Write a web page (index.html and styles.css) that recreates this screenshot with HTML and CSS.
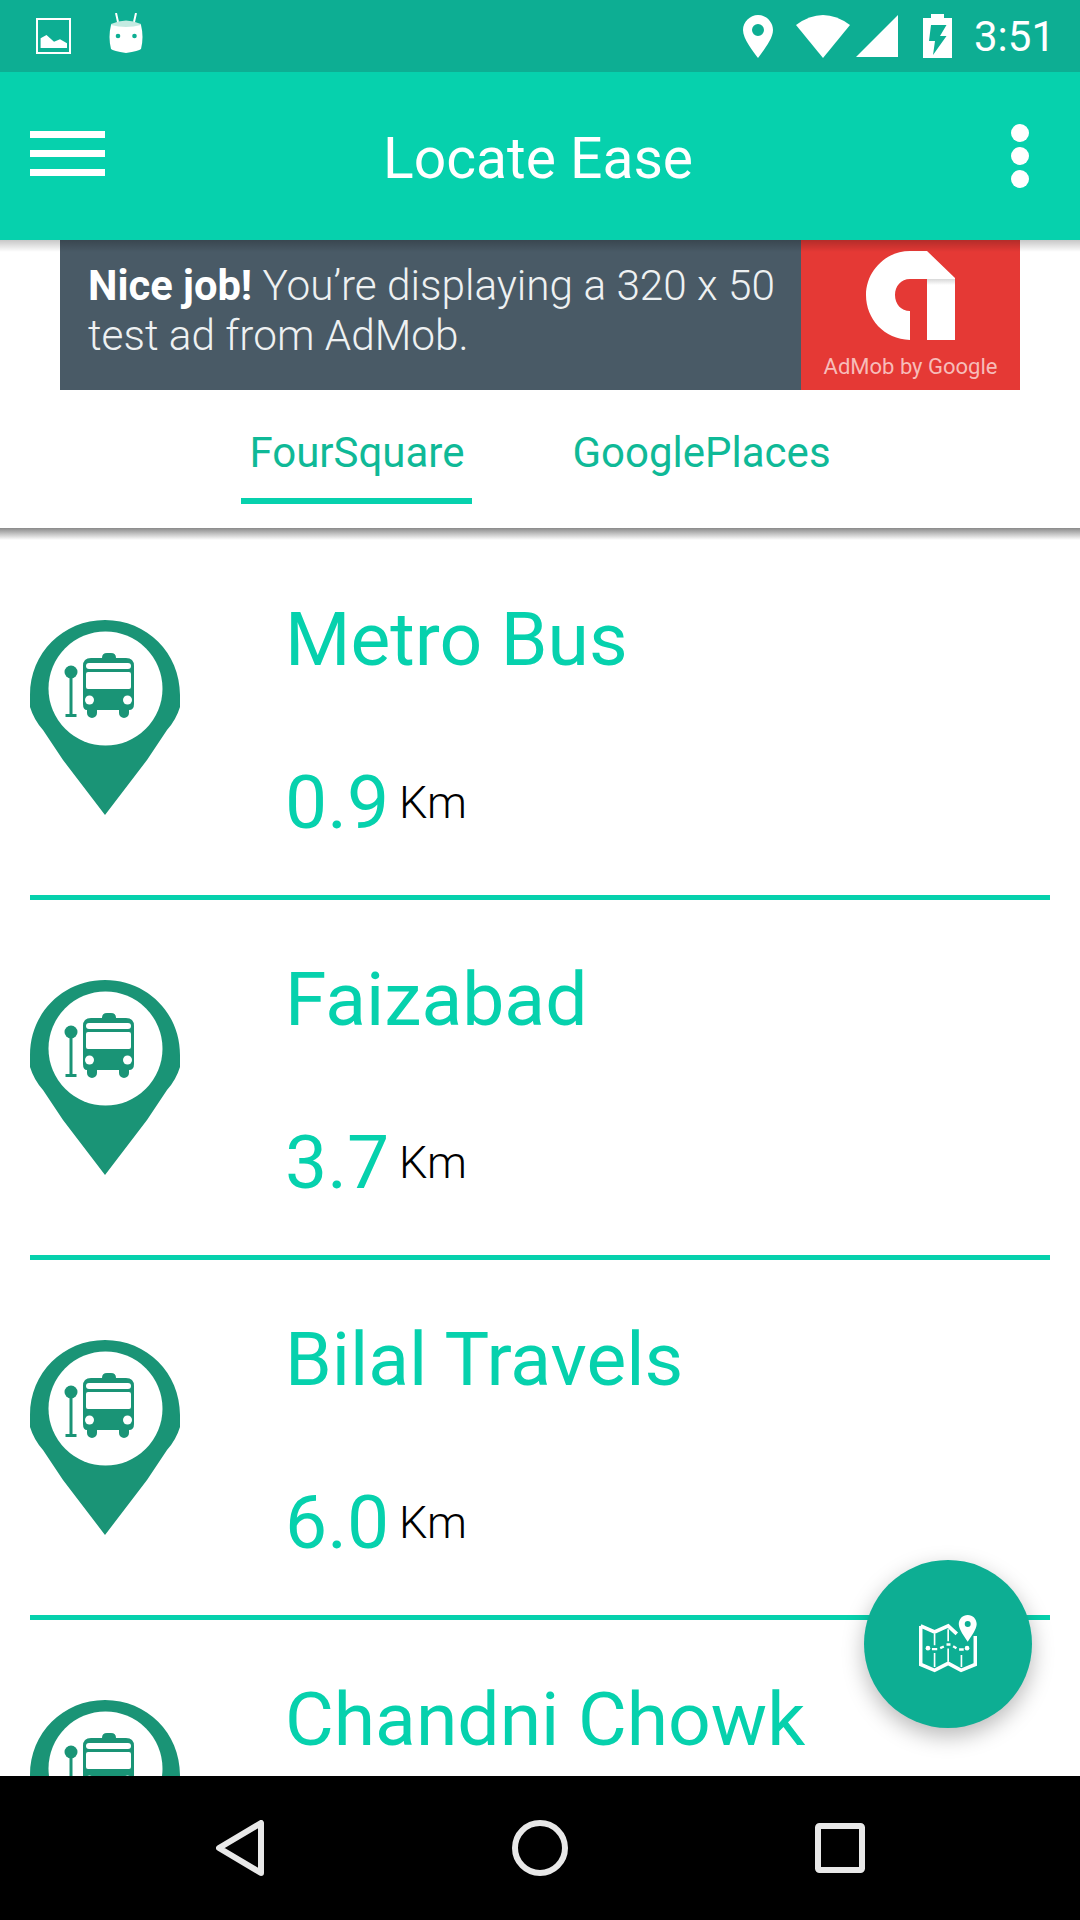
FILE: index.html
```html
<!DOCTYPE html>
<html lang="en">
<head>
<meta charset="utf-8">
<title>Locate Ease</title>
<link rel="stylesheet" href="styles.css">
</head>
<body>
<svg class="defs" width="0" height="0" aria-hidden="true">
  <defs>
    <linearGradient id="fold" x1="0" y1="0" x2="0" y2="1">
      <stop offset="0" stop-color="#d8d8d8"/>
      <stop offset="1" stop-color="#ffffff"/>
    </linearGradient>
  </defs>
  <symbol id="pin" viewBox="0 0 150 195">
    <path fill="#1a9476" d="M75 0C117 0 150 33 150 75V87Q146 100 137 110L117 140L75 195L33 140L13 110Q4 100 0 87V75C0 33 33 0 75 0Z"/>
    <circle cx="75.500" cy="68.500" r="57" fill="#fff"/>
    <path fill="#1a9476" d="M72 38Q72 33 77 33H81Q86 33 86 38H96Q104 38 104 46V84Q104 90 99 90V93A5 5 0 0 1 89 93V90H67V93A5 5 0 0 1 57 93V90Q53 90 53 84V46Q53 38 61 38Z"/>
    <rect x="56" y="43" width="45" height="6" rx="3" fill="#fff"/>
    <rect x="56" y="52" width="45" height="17" rx="2" fill="#fff"/>
    <circle cx="59.500" cy="80" r="4.500" fill="#fff"/>
    <circle cx="97.500" cy="80" r="4.500" fill="#fff"/>
    <circle cx="41" cy="52" r="6.500" fill="#1a9476"/>
    <rect x="39.500" y="55" width="3" height="40" fill="#1a9476"/>
    <rect x="35.500" y="94" width="11" height="3" fill="#1a9476"/>
  </symbol>
</svg>
<div class="phone">
  <header class="status">
    <div class="status-left">
      <svg class="ic-image" viewBox="0 0 35 36"><path fill="#fff" d="M0 0H35V36H0ZM2 2V34H33V2Z" fill-rule="evenodd"/><path fill="#fff" d="M4.600 20.300L10.500 17L18 23.700L24 21.300L31 25.300V30H4.600Z"/></svg>
      <svg class="ic-android" viewBox="0 0 34 40"><path stroke="#fff" stroke-width="2" d="M7 0L9 9M27 0L25 9"/><path fill="#c4ebe2" d="M2 11Q17 4 32 11V14H2Z"/><path fill="#fff" d="M2 12Q17 16 32 12Q35 24 32 36Q30 38 17 40Q4 38 2 36Q-1 24 2 12Z"/><circle cx="9" cy="23" r="2.300" fill="#0dae93"/><circle cx="25.500" cy="23" r="2.300" fill="#0dae93"/></svg>
    </div>
    <div class="status-right">
      <svg class="ic-loc" viewBox="0 0 30 43"><path fill="#fff" fill-rule="evenodd" d="M15 0C23 0 30 7 30 15C30 24 20 36 15 43C10 36 0 24 0 15C0 7 7 0 15 0ZM15 9A6 6 0 1 0 15 21A6 6 0 1 0 15 9Z"/></svg>
      <svg class="ic-wifi" viewBox="0 0 54 43"><path fill="#fff" d="M0 10Q27 -10 54 10L27 43Z"/></svg>
      <svg class="ic-signal" viewBox="0 0 42 42"><path fill="#fff" d="M42 0V42H0Z"/></svg>
      <svg class="ic-batt" viewBox="0 0 29 44"><path fill="#fff" fill-rule="evenodd" d="M8 0H21V4H29V44H0V4H8ZM8 11L6 27H12L10 41L23.500 22H17L23.500 11Z"/></svg>
      <span class="clock">3:51</span>
    </div>
  </header>

  <div class="appbar">
    <div class="burger"><span></span><span></span><span></span></div>
    <h1 class="title">Locate Ease</h1>
    <div class="dots"><span></span><span></span><span></span></div>
  </div>

  <div class="ad">
    <div class="ad-copy"><b>Nice job!</b> You’re displaying a 320 x 50<br>test ad from AdMob.</div>
    <div class="ad-brand">
      <svg class="ad-logo" viewBox="0 0 89 90">
        <path fill="#fff" d="M61 0L89 27V89H61V28H44C35 28 29 35 29 44C29 53 35 60 44 60V89C18 88 0 68 0 44C0 20 20 0 44 0Z"/>
        <rect x="61" y="28" width="28" height="6" fill="url(#fold)"/>
      </svg>
      <span class="ad-brand-text">AdMob by Google</span>
    </div>
  </div>

  <nav class="tabs">
    <a class="tab tab-active">FourSquare</a>
    <a class="tab">GooglePlaces</a>
  </nav>

  <main class="list">
    <article class="row">
      <svg class="pin"><use href="#pin"/></svg>
      <div class="info"><div class="name">Metro Bus</div><div class="dist"><span class="num">0.9</span><span class="unit">Km</span></div></div>
    </article>
    <article class="row">
      <svg class="pin"><use href="#pin"/></svg>
      <div class="info"><div class="name">Faizabad</div><div class="dist"><span class="num">3.7</span><span class="unit">Km</span></div></div>
    </article>
    <article class="row">
      <svg class="pin"><use href="#pin"/></svg>
      <div class="info"><div class="name">Bilal Travels</div><div class="dist"><span class="num">6.0</span><span class="unit">Km</span></div></div>
    </article>
    <article class="row">
      <svg class="pin"><use href="#pin"/></svg>
      <div class="info"><div class="name">Chandni Chowk</div></div>
    </article>
  </main>

  <button class="fab" aria-label="Map">
    <svg class="fab-icon" viewBox="237 225 175 175">
      <path fill="none" stroke="#fff" stroke-width="11" d="M242 258V374L284 392L325 371L364 392L407 374V288M242 258L284 276L325 258L351 282"/>
      <path fill="none" stroke="#fff" stroke-width="5" d="M284 282V316M284 340V382M325 268V304M325 326V366M365 346V382"/>
      <circle cx="264" cy="325" r="7" fill="#fff"/>
      <circle cx="382" cy="325" r="7" fill="#fff"/>
      <path fill="none" stroke="#fff" stroke-width="7" d="M276 328H292M301 325L312 320M320 314H332M340 319L350 325M358 329H372"/>
      <path fill="#fff" fill-rule="evenodd" d="M384 225C399 225 411 237 411 252C411 268 394 290 384 306C374 290 357 268 357 252C357 237 369 225 384 225ZM384 243A9 9 0 1 0 384 261A9 9 0 1 0 384 243Z"/>
    </svg>
  </button>

  <footer class="navbar">
    <svg class="nav-back" viewBox="0 0 48 56"><path fill="none" stroke="#e8e8e8" stroke-width="6" stroke-linejoin="round" d="M45 3V53L3 28Z"/></svg>
    <svg class="nav-home" viewBox="0 0 56 56"><circle cx="28" cy="28" r="25" fill="none" stroke="#e8e8e8" stroke-width="6"/></svg>
    <svg class="nav-recent" viewBox="0 0 50 50"><rect x="3" y="3" width="44" height="44" rx="1.500" fill="none" stroke="#e8e8e8" stroke-width="6"/></svg>
  </footer>
</div>
</body>
</html>
```

FILE: styles.css
```css
* { box-sizing: border-box; }
html, body { margin: 0; padding: 0; background: #fff; }
body { font-family: Roboto, "Liberation Sans", sans-serif; }
.defs { display: block; height: 0; }

.phone {
  position: relative;
  width: 1080px;
  height: 1920px;
  display: flex;
  flex-direction: column;
  overflow: hidden;
  background: #fff;
}

/* status bar */
.status {
  height: 72px;
  flex: none;
  background: #0dae93;
  display: flex;
  justify-content: space-between;
  align-items: center;
  padding: 0 25px 0 36px;
}
.status-left, .status-right { display: flex; align-items: center; }
.status-left { gap: 38px; }
.ic-image { width: 35px; height: 36px; }
.ic-android { width: 34px; height: 40px; margin-top: -6px; }
.ic-loc { width: 30px; height: 43px; margin-right: 23px; }
.ic-wifi { width: 54px; height: 43px; margin-right: 6px; }
.ic-signal { width: 42px; height: 42px; margin-right: 25px; }
.ic-batt { width: 29px; height: 44px; margin-right: 22px; }
.clock { font-size: 42px; font-weight: 400; color: #fff; line-height: 42px; margin-top: 2px; }

/* app bar */
.appbar {
  position: relative;
  z-index: 3;
  height: 168px;
  flex: none;
  background: #06d1ad;
  display: flex;
  align-items: center;
  justify-content: space-between;
  padding: 0 51px 0 30px;
}
.appbar::after {
  content: "";
  position: absolute;
  left: 0;
  right: 0;
  top: 100%;
  height: 12px;
  background: linear-gradient(rgba(0, 0, 0, .22), rgba(0, 0, 0, 0));
}
.burger { width: 75px; display: flex; flex-direction: column; gap: 12px; margin-top: -5px; }
.burger span { height: 7px; background: #fff; }
.title {
  margin: 0;
  position: absolute;
  left: 0;
  right: 4px;
  top: 0;
  text-align: center;
  font-size: 57px;
  font-weight: 400;
  color: #fff;
  line-height: 173px;
}
.dots { display: flex; flex-direction: column; gap: 5px; margin-top: -1px; }
.dots span { width: 18px; height: 18px; border-radius: 50%; background: #fff; }

/* ad */
.ad {
  width: 960px;
  height: 150px;
  flex: none;
  margin: 0 auto;
  display: flex;
  background: #495a66;
}
.ad-copy {
  flex: 1;
  padding: 21px 0 0 28px;
  font-size: 42.300px;
  font-weight: 300;
  line-height: 50px;
  color: #eef1f2;
  white-space: nowrap;
}
.ad-copy b { color: #fff; font-weight: 700; font-size: 41.700px; }
.ad-brand {
  width: 219px;
  background: #e53935;
  display: flex;
  flex-direction: column;
  align-items: center;
  padding-top: 11px;
}
.ad-logo { width: 89px; height: 90px; }
.ad-brand-text { font-size: 22px; line-height: 26px; margin-top: 13px; color: #f7bcb9; white-space: nowrap; }

/* tabs */
.tabs {
  position: relative;
  z-index: 2;
  height: 138px;
  flex: none;
  display: flex;
  justify-content: center;
  gap: 92px;
  background: #fff;
}
.tabs::after {
  content: "";
  position: absolute;
  left: 0;
  right: 0;
  top: 100%;
  height: 12px;
  background: linear-gradient(#8a8a8a, rgba(255, 255, 255, 0));
}
.tab {
  height: 114px;
  padding: 0 8px;
  font-size: 42px;
  line-height: 126px;
  color: #0fb997;
}
.tab-active { border-bottom: 6px solid #06d1ad; }

/* list */
.list { flex: 1; min-height: 0; overflow: hidden; padding-top: 12px; }
.row {
  height: 360px;
  margin: 0 30px;
  display: flex;
  align-items: flex-start;
  border-bottom: 5px solid #06d1ad;
}
.pin { width: 150px; height: 195px; margin-top: 80px; flex: none; }
.info { margin-left: 105px; padding-top: 57px; }
.name { font-size: 75px; line-height: 84px; color: #06d1ad; white-space: nowrap; }
.dist { display: flex; align-items: center; margin-top: 79px; }
.num { font-size: 75px; line-height: 84px; color: #06d1ad; }
.unit { font-size: 45px; font-weight: 300; color: #000; margin-left: 10px; }
.row:last-child { border-bottom: 0; }

/* fab */
.fab {
  position: absolute;
  left: 864px;
  top: 1560px;
  width: 168px;
  height: 168px;
  border: 0;
  padding: 0;
  border-radius: 50%;
  background: #0dae93;
  box-shadow: 0 8px 22px rgba(0, 0, 0, .28);
  display: flex;
  align-items: center;
  justify-content: center;
  z-index: 4;
}
.fab-icon { width: 58px; height: 58px; }

/* nav bar */
.navbar {
  position: relative;
  z-index: 5;
  height: 144px;
  flex: none;
  background: #000;
  display: flex;
  align-items: center;
}
.nav-back { width: 48px; height: 56px; margin-left: 216px; }
.nav-home { width: 56px; height: 56px; margin-left: 248px; }
.nav-recent { width: 50px; height: 50px; margin-left: 247px; }
```
